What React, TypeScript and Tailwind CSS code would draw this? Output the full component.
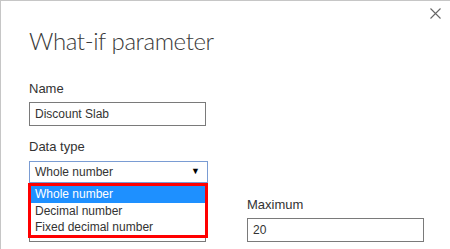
import { useState } from 'react';

const options = ['Whole number', 'Decimal number', 'Fixed decimal number'];

const CloseIcon = () => (
  <svg width="11" height="11" viewBox="0 0 11 11" className="text-[#666]">
    <path d="M0.5 0.5 L10.5 10.5 M10.5 0.5 L0.5 10.5" stroke="currentColor" strokeWidth="1.1" fill="none" />
  </svg>
);

const App = () => {
  const [selected] = useState(0);

  return (
    <div
      className="relative w-[450px] h-[249px] overflow-hidden bg-white border-l border-t border-[#c6c6c6] text-[#333]"
      style={{ fontFamily: '"Segoe UI", "Liberation Sans", Arial, sans-serif' }}
    >
      {/* close button */}
      <button className="absolute top-[7px] right-[9px] p-0">
        <CloseIcon />
      </button>

      <div className="pl-[28px] pt-[23px]">
        <h1
          className="text-[24px] leading-[34px] font-light tracking-[-0.4px] text-[#3a3a3a]"
          style={{ fontFamily: '"Segoe UI Light", Lato, "Liberation Sans", sans-serif' }}
        >
          What-if parameter
        </h1>

        <label className="block mt-[22px] text-[13px] leading-[18px]">Name</label>
        <div className="mt-[4px] w-[177px] h-[24px] border border-[#7a7a7a] px-[5px] text-[12px] leading-[22px]">
          Discount Slab
        </div>

        <label className="block mt-[12px] text-[13px] leading-[18px]">Data type</label>
        <div className="relative mt-[5px] w-[179px]">
          <div className="flex items-center justify-between h-[22px] border border-[#7a9cd3] pl-[5px] pr-[7px] text-[12px]">
            <span>Whole number</span>
            <span className="text-[9px] text-black">▼</span>
          </div>

          {/* open list, highlighted with a red box */}
          <ul className="absolute z-10 left-[-1px] top-[22px] w-[180px] bg-white border-[3px] border-[#ff0000] text-[12px]">
            {options.map((o, i) => (
              <li
                key={o}
                className={
                  i === selected
                    ? 'h-[17px] leading-[17px] pl-[4px] bg-[#1e90ff] text-white'
                    : 'h-[16px] leading-[16px] pl-[4px] text-[#333]'
                }
              >
                {o}
              </li>
            ))}
          </ul>
        </div>

        <div className="grid grid-cols-[177px_177px] gap-x-[41px] mt-[13px]">
          <div>
            <label className="invisible block text-[13px] leading-[18px]">Minimum</label>
            <div className="mt-[4px] h-[24px] border border-[#7a7a7a]" />
          </div>
          <div>
            <label className="block text-[13px] leading-[18px]">Maximum</label>
            <div className="mt-[4px] h-[24px] border border-[#7a7a7a] px-[5px] text-[12px] leading-[22px]">20</div>
          </div>
        </div>
      </div>
    </div>
  );
};

export default App;
